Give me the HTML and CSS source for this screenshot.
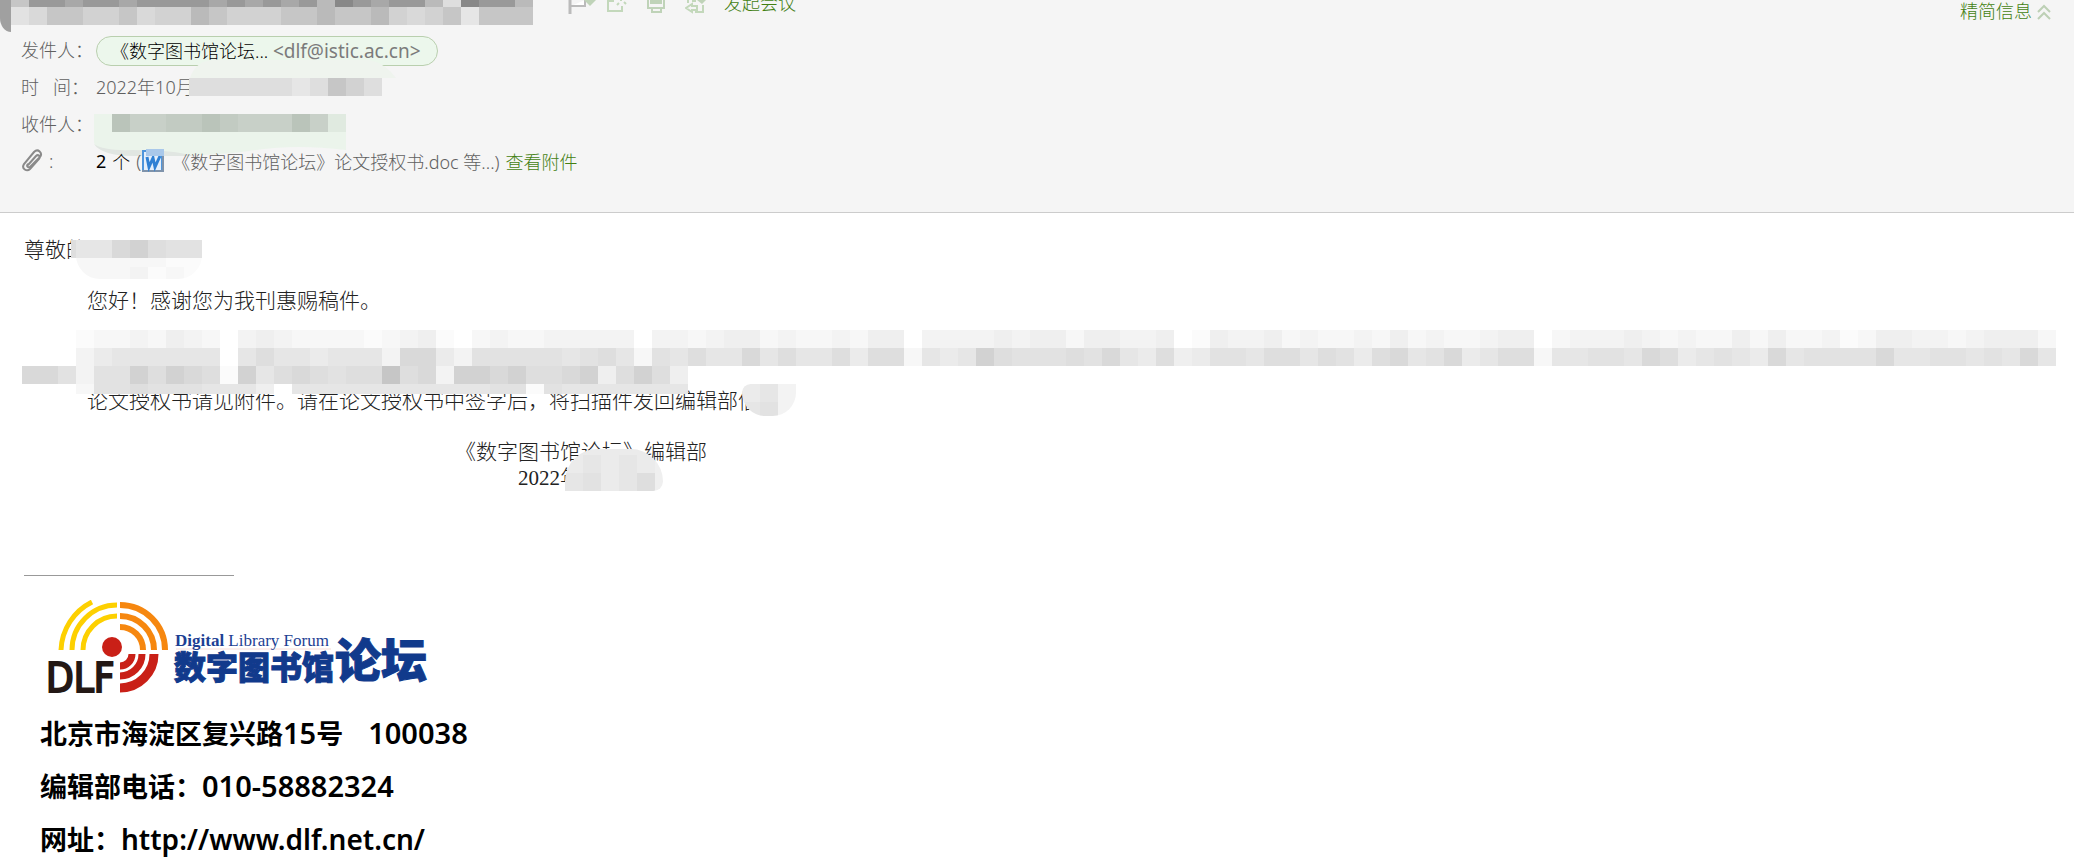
FILE: index.html
```html
<!DOCTYPE html>
<html lang="zh-CN">
<head>
  <meta charset="UTF-8" />
  <title>《数字图书馆论坛》</title>
  <link rel="stylesheet" href="styles.css">
</head>
<body>
  <header class="mail-head">
    <!-- Subject + toolbar, scrolled partly out of view -->
    <div class="subject-row">
      <span class="corner"></span>
      <div class="mosaic subject" data-rows="beedeedeeeedededecfedeec8feec 79bbaab9aacbaaabbcbbca9ab6bbba"></div>
      <div class="tools">
        <button class="tool" aria-label="标记">
          <svg width="28" height="15" viewBox="0 0 28 15"><path d="M2 0v14" stroke="#bbb" stroke-width="3"/><path d="M3 6h14V0" fill="#fff" stroke="#bbb" stroke-width="2"/><path d="M16 0h12l-6 6z" fill="#bfd3b8"/></svg>
        </button>
        <button class="tool" aria-label="新窗口">
          <svg width="22" height="15" viewBox="0 0 22 15"><path d="M1 0v11h14V6M1 1h6M10 5l2-2M14 0v1M17 2l2 2" fill="none" stroke="#c3d8bb" stroke-width="2"/></svg>
        </button>
        <button class="tool" aria-label="打印">
          <svg width="22" height="15" viewBox="0 0 22 15"><path d="M4 0h12v4H4z" fill="#bfd3b8"/><path d="M2 0v8h16V0M6 8v4h9V8z" fill="none" stroke="#bfd3b8" stroke-width="2"/></svg>
        </button>
        <button class="tool" aria-label="更多">
          <svg width="22" height="15" viewBox="0 0 22 15"><path d="M12 0h9l-4 4z" fill="#bfd3b8"/><path d="M3 0v3M7 1h4M18 5v7h-8M7 4L1 8l6 4v-2h5V6H7z" fill="none" stroke="#c3d8bb" stroke-width="2"/></svg>
        </button>
        <a class="meeting" href="#">发起会议</a>
      </div>
      <a class="brief" href="#">精简信息
        <svg width="14" height="16" viewBox="0 0 14 16"><path d="M1 8l6-6 6 6M1 15l6-6 6 6" fill="none" stroke="#bdd0b5" stroke-width="2"/></svg>
      </a>
    </div>

    <div class="field">
      <span class="label">发件人：</span>
      <span class="sender"><b>《数字图书馆论坛...</b> <span class="latin">&lt;dlf@istic.ac.cn&gt;</span></span>
    </div>
    <div class="field">
      <span class="label">时&nbsp;&nbsp; 间：</span>
      <span>2022年10月</span>
      <svg class="smear time-smear" width="210" height="18" viewBox="0 0 210 18"><path d="M0 18Q6 0 24 0H180Q196 4 206 18z" fill="#eff4ee"/></svg>
      <div class="mosaic time" data-rows="88888868ba8"></div>
    </div>
    <div class="field">
      <span class="label">收件人：</span>
      <svg class="smear to-smear" width="254" height="42" viewBox="0 0 254 42">
        <path d="M0 0h252v36q-50-6-90 0T60 42H30Q0 36 0 28z" fill="#ebf4eb"/>
        <g shape-rendering="crispEdges">
          <path d="M18 0h216v18H18z" fill="#c8d0c8"/>
          <path d="M18 0h18v18H18zM108 0h18v18h-18zM198 0h18v18h-18z" fill="#bac4ba"/>
          <path d="M72 0h36v18H72zM126 0h18v18h-18z" fill="#c2cbc2"/>
          <path d="M234 0h18v18h-18z" fill="#e0eae0"/>
        </g>
        <path d="M0 30Q8 42 40 42h60q-20-6-62-6Q10 37 0 30z" fill="#e1e6e2"/>
      </svg>
    </div>
    <div class="field attach">
      <span class="label clip">
        <svg width="22" height="24" viewBox="0 0 22 24"><path d="M7 16l8-9c2-2 5 0 3 3L9 20c-3 3-9 0-6-5L13 3c4-4 9 1 6 5L9 18c-2 1-4-1-2-3" fill="none" stroke="#8a8a8a" stroke-width="2"/></svg>
        :
      </span>
      <strong>2</strong><span class="unit">个</span>
      <span>(</span>
      <svg class="doc" width="22" height="24" viewBox="0 0 22 24"><path d="M1 2h19v20H1z" fill="#e4effb" stroke="#4e95dc" stroke-width="2"/><path d="M0 21h22v2H0zM20 2h2v20h-2z" fill="#7f93ab"/><path d="M5 8l2 10 4-9 2 9 5-11" fill="none" stroke="#2f80d4" stroke-width="3"/><path d="M4 0h18v7H4z" fill="#a9c8ea"/></svg>
      <span class="file">《数字图书馆论坛》论文授权书.doc 等...)</span>
      <a href="#">查看附件</a>
    </div>
  </header>

  <main class="mail-body">
    <div class="greeting">
      <p>尊敬的</p>
      <div class="mosaic name-halo" data-rows="2222211 2223121"></div>
      <div class="mosaic name" data-rows="8669a877"></div>
    </div>
    <p class="indent">您好！感谢您为我刊惠赐稿件。</p>

    <div class="redacted">
      <div class="mosaic" data-rows="00012232432034322221234102322333330332344232232440333343442443340143342322324232234402333432322424223124433234442 00035666666068665666399537777767862768669686685882656a87778796584577688687589679568826677698567659677779667767696 997377a8a981a6898788b893aa9a889a48a84 0002778777666406666666666677176666666"></div>
    </div>

    <div class="notice">
      <p class="indent">论文授权书请见附件。请在论文授权书中签字后，将扫描件发回编辑部信</p>
      <div class="mosaic notice-end" data-rows="563 673"></div>
    </div>

    <div class="sign-off">
      <p>《数字图书馆论坛》编辑部</p>
      <p class="date">2022年</p>
      <div class="mosaic date-end" data-rows="555554 565654 675684"></div>
    </div>

    <hr>

    <footer class="signature">
      <svg class="logo" width="390" height="100" viewBox="0 0 390 100" role="img" aria-label="DLF 数字图书馆论坛">
        <!-- rings: yellow, orange, red quarters -->
        <g fill="none" stroke-width="5" stroke="#fdd000">
          <path d="M15 50A56 56 0 0 1 46 2"/>
          <path d="M26 50A45 45 0 0 1 71 5"/>
          <path d="M37 50A34 34 0 0 1 71 16"/>
        </g>
        <g fill="none" stroke-width="6" stroke="#f6870f">
          <path d="M74 5A45 45 0 0 1 119 50"/>
          <path d="M74 16A34 34 0 0 1 108 50"/>
          <path d="M74 27A23 23 0 0 1 97 50"/>
        </g>
        <g fill="none" stroke="#c92017">
          <path d="M74 66A12 12 0 0 0 86 54" stroke-width="7"/>
          <path d="M74 76A22 22 0 0 0 96 54" stroke-width="7"/>
          <path d="M74 88A34 34 0 0 0 108 54" stroke-width="9"/>
        </g>
        <circle cx="66" cy="47" r="10" fill="#c92017"/>
        <text class="dlf" x="0" y="92">DLF</text>
        <path d="M130 49h155" stroke="#f8dcd8"/>
        <text class="en" x="129" y="46"><tspan font-weight="bold">Digital</tspan> Library Forum</text>
        <text class="cn" x="128" y="79">数字图书馆</text>
        <text class="cn big" x="289" y="77">论坛</text>
      </svg>
      <p>北京市海淀区复兴路<span>15</span>号<span class="zip">100038</span></p>
      <p>编辑部电话：<span>010-58882324</span></p>
      <p>网址：<span class="url">http://www.dlf.net.cn/</span></p>
    </footer>
  </main>

  <script>
    // one character per 18px cell, 0 = empty, f = darkest
    const shades = ["none", "#fbfbfb", "#f7f7f7", "#f3f3f3", "#efefef", "#ebebeb", "#e6e6e6", "#e2e2e2",
      "#dedede", "#d9d9d9", "#d2d2d2", "#c6c6c6", "#bababa", "#a8a8a8", "#999999", "#888888"];
    const cell = 18;

    document.querySelectorAll(".mosaic").forEach(box => {
      const rows = box.dataset.rows.split(" ");
      const cols = Math.max(...rows.map(r => r.length));
      let rects = "";
      rows.forEach((row, y) => {
        [...row].forEach((c, x) => {
          rects += `<rect x="${x * cell}" y="${y * cell}" width="${cell}" height="${cell}" fill="${shades[parseInt(c, 16)]}"/>`;
        });
      });
      box.innerHTML = `<svg width="${cols * cell}" height="${rows.length * cell}" shape-rendering="crispEdges">${rects}</svg>`;
    });
  </script>
</body>
</html>
```

FILE: styles.css
```css
body {
  margin: 0;
  background: #fff;
  font-family: "Noto Sans", "Noto Sans CJK SC", sans-serif;
  font-size: 18px;
  font-weight: 300;
  overflow-x: hidden;
}

p {
  margin: 0;
}

a {
  color: #437f12;
  text-decoration: none;
}

svg {
  display: block;
}

.mosaic {
  overflow: hidden;
}

/* Header */
.mail-head {
  background: #f5f5f5;
  border-bottom: 1px solid #ccc;
  color: #606060;
  padding-bottom: 30px;
}

.subject-row {
  display: flex;
  align-items: flex-start;
  height: 32px;
  overflow: hidden;
}

.corner {
  width: 11px;
  height: 32px;
  background: #a0a0a0;
  border-bottom-left-radius: 11px 14px;
}

.subject {
  width: 522px;
  margin-top: -11px;
}

.tools {
  display: flex;
  margin-left: 35px;
}

.tool {
  width: 39px;
  height: 15px;
  padding: 0;
  border: 0;
  background: none;
}

.meeting {
  line-height: 24px;
  margin-top: -9px;
}

.brief {
  display: flex;
  gap: 5px;
  margin-left: auto;
  margin-right: 23px;
  line-height: 22px;
}

.brief svg {
  margin-top: 4px;
}

.field {
  box-sizing: border-box;
  position: relative;
  display: flex;
  align-items: center;
  height: 37px;
  padding: 0 0 3px 21px;
}

.label {
  width: 75px;
  white-space: nowrap;
}

.sender {
  box-sizing: border-box;
  height: 30px;
  line-height: 28px;
  margin-top: 3px;
  padding: 0 16px 0 14px;
  border: 1px solid #b9cfae;
  border-radius: 15px;
  background: #ecf7ec;
  white-space: nowrap;
}

.sender b {
  color: #000;
  font-weight: 300;
}

.latin {
  color: #7b7b7b;
  font-size: 19px;
  font-weight: 400;
}

.smear,
.time {
  position: absolute;
}

.time-smear {
  left: 190px;
  top: -9px;
}

.time {
  left: 184px;
  top: 9px;
  height: 18px;
  clip-path: inset(0 0 0 5px);
}

.to-smear {
  left: 94px;
  top: 8px;
}

.attach {
  height: 39px;
}

.clip {
  display: flex;
  align-items: center;
  gap: 6px;
}

.attach strong {
  color: #000;
}

.unit {
  color: #000;
  margin: 0 6px;
}

.doc {
  margin-left: 1px;
}

.file {
  margin: 0 6px 0 8px;
}

/* Letter */
.mail-body {
  padding: 24px 0 0 24px;
  font-family: "Liberation Serif", "Noto Sans CJK SC", serif;
  font-size: 21px;
  line-height: 26px;
  color: #222;
}

.greeting,
.notice,
.sign-off {
  position: relative;
  white-space: nowrap;
}

.name,
.name-halo,
.notice-end,
.date-end {
  position: absolute;
}

.name {
  left: 34px;
  top: 3px;
  height: 18px;
  clip-path: inset(0 0 0 13px);
}

.name-halo {
  left: 52px;
  top: 12px;
  height: 30px;
  border-radius: 0 0 24px 24px;
}

.indent {
  padding-left: 63px;
}

.greeting + .indent {
  margin-top: 25px;
}

.redacted {
  position: relative;
  z-index: 1;
  height: 58px;
  margin: 16px 0 0 -2px;
}

.redacted .mosaic {
  height: 64px;
}

.notice-end {
  left: 718px;
  top: -4px;
  height: 32px;
  border-radius: 10px 0 27px 27px;
}

.sign-off {
  width: fit-content;
  margin: 25px 0 0 431px;
}

.date {
  padding-left: 63px;
}

.date-end {
  left: 110px;
  top: 10px;
  width: 98px;
  height: 42px;
  border-radius: 40px 40px 12px 0;
}

.date-end svg {
  margin-top: -12px;
}

hr {
  width: 210px;
  height: 1px;
  margin: 84px 0 0;
  border: 0;
  background: #999;
}

/* Signature */
.signature {
  padding: 24px 0 0 16px;
  font-family: "Noto Sans CJK SC", sans-serif;
  font-size: 27px;
  font-weight: 700;
  line-height: 53px;
  color: #000;
}

.signature span {
  font-family: "Noto Sans", sans-serif;
  font-size: 29px;
  font-weight: 600;
}

.signature .url {
  font-size: 28px;
}

.signature .zip {
  margin-left: 25px;
}

.logo {
  margin: 0 0 6px 6px;
}

.dlf {
  font: 40px "DejaVu Sans Condensed", "DejaVu Sans", sans-serif;
  fill: #231815;
  stroke: #231815;
  stroke-width: 2px;
}

.en {
  font: 17px "Liberation Serif", serif;
  fill: #1d3f94;
}

.cn {
  font: 900 32px "Noto Sans CJK SC", sans-serif;
  fill: #113a8c;
  stroke: #113a8c;
}

.big {
  font-size: 46px;
}
```
